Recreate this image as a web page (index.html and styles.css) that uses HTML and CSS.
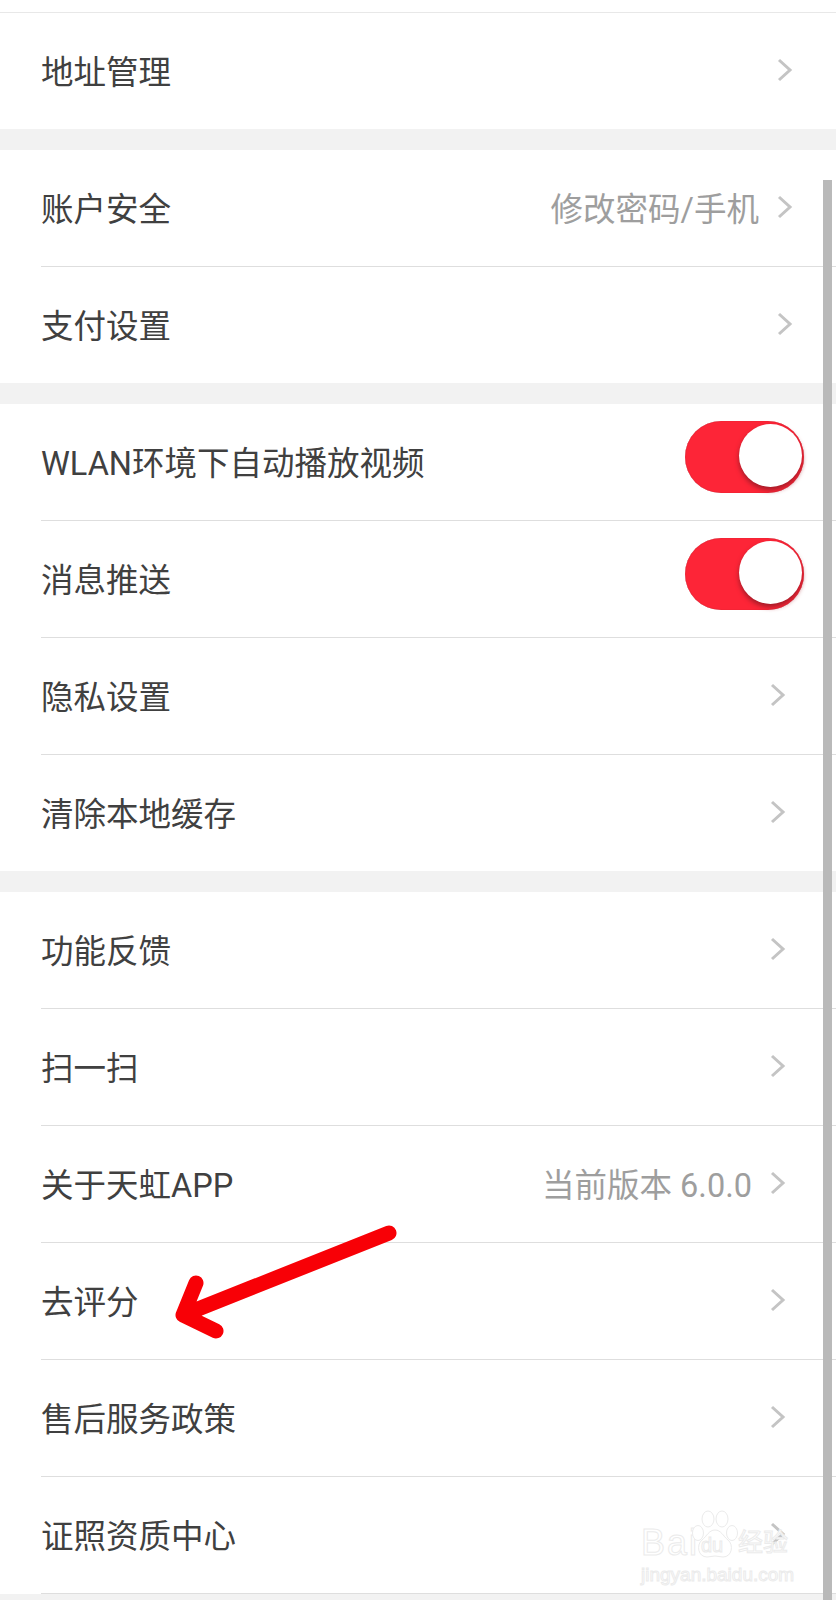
FILE: index.html
```html
<!DOCTYPE html>
<html lang="zh-CN">
<head>
    <meta charset="UTF-8">
    <meta name="viewport" content="width=device-width, initial-scale=1.0">
    <title>设置</title>
    <link rel="stylesheet" href="styles.css">
</head>
<body>
    <div class="page">
        <div class="stub"></div>
        <div class="group">
            <div class="row wide"><span class="label">地址管理</span><svg class="chev" viewBox="0 0 16 24"><path d="M2 2l11 10L2 22"/></svg></div>
        </div>
        <div class="group">
            <div class="row wide"><span class="label">账户安全</span><span class="value">修改密码/手机</span><svg class="chev" viewBox="0 0 16 24"><path d="M2 2l11 10L2 22"/></svg></div>
            <div class="row wide"><span class="label">支付设置</span><svg class="chev" viewBox="0 0 16 24"><path d="M2 2l11 10L2 22"/></svg></div>
        </div>
        <div class="group">
            <div class="row"><span class="label">WLAN环境下自动播放视频</span><span class="switch"><span class="knob"></span></span></div>
            <div class="row"><span class="label">消息推送</span><span class="switch"><span class="knob"></span></span></div>
            <div class="row"><span class="label">隐私设置</span><svg class="chev" viewBox="0 0 16 24"><path d="M2 2l11 10L2 22"/></svg></div>
            <div class="row"><span class="label">清除本地缓存</span><svg class="chev" viewBox="0 0 16 24"><path d="M2 2l11 10L2 22"/></svg></div>
        </div>
        <div class="group">
            <div class="row"><span class="label">功能反馈</span><svg class="chev" viewBox="0 0 16 24"><path d="M2 2l11 10L2 22"/></svg></div>
            <div class="row"><span class="label">扫一扫</span><svg class="chev" viewBox="0 0 16 24"><path d="M2 2l11 10L2 22"/></svg></div>
            <div class="row"><span class="label">关于天虹APP</span><span class="value">当前版本 6.0.0</span><svg class="chev" viewBox="0 0 16 24"><path d="M2 2l11 10L2 22"/></svg></div>
            <div class="row"><span class="label">去评分</span><svg class="chev" viewBox="0 0 16 24"><path d="M2 2l11 10L2 22"/></svg></div>
            <div class="row"><span class="label">售后服务政策</span><svg class="chev" viewBox="0 0 16 24"><path d="M2 2l11 10L2 22"/></svg></div>
            <div class="row row-end"><span class="label">证照资质中心</span><svg class="chev" viewBox="0 0 16 24"><path d="M2 2l11 10L2 22"/></svg></div>
        </div>

        <div class="scrollbar"></div>

        <svg class="arrow" viewBox="0 0 240 130">
            <path d="M221 9L15 91M28 59L15 91L48 107"/>
        </svg>

        <div class="watermark">
            <div class="wm-top">
                <span class="wm-bai">Bai</span>
                <span class="wm-logo">
                    <svg class="wm-paw" viewBox="0 0 46 48">
                        <ellipse cx="6" cy="23" rx="5.5" ry="7.5"/>
                        <ellipse cx="16" cy="9" rx="6" ry="8"/>
                        <ellipse cx="30" cy="9" rx="6" ry="8"/>
                        <ellipse cx="40" cy="23" rx="5.5" ry="7.5"/>
                        <path d="M23 20c-6 0-8 6-13 10-6 5-4 17 5 17 3 0 5-1 8-1s5 1 8 1c9 0 11-12 5-17-5-4-7-10-13-10z"/>
                    </svg>
                    <span class="wm-du">du</span>
                </span>
                <span class="wm-cn">经验</span>
            </div>
            <div class="wm-url">jingyan.baidu.com</div>
        </div>
    </div>
</body>
</html>
```

FILE: styles.css
```css
* {
    margin: 0;
    padding: 0;
    box-sizing: border-box;
}

body {
    font-family: Roboto, "Noto Sans CJK SC", sans-serif;
    background: #f2f2f2;
}

.page {
    position: relative;
    width: 836px;
    height: 1600px;
    overflow: hidden;
}

.stub {
    height: 13px;
    background: #fff;
    border-bottom: 1px solid #e8e8e8;
}

.group {
    background: #fff;
    margin-bottom: 21px;
}

.group:last-of-type {
    margin-bottom: 0;
}

.row {
    height: 117px;
    margin-left: 41px;
    padding: 0 50px 3px 0;
    display: flex;
    align-items: center;
    border-bottom: 1px solid #dedede;
    font-size: 32.5px;
    color: #404040;
}

.group > .row:last-child {
    height: 116px;
    border-bottom: none;
}

.group > .row.row-end {
    height: 117px;
    border-bottom: 1px solid #dedede;
}

.wide {
    padding-right: 43px;
}

.label {
    flex: 1;
    white-space: nowrap;
}

.value {
    color: #9e9e9e;
    white-space: nowrap;
    margin-right: 18px;
}

.chev {
    width: 16px;
    height: 24px;
    fill: none;
    stroke: #c4c4c4;
    stroke-width: 3;
}

.switch {
    position: relative;
    width: 119px;
    height: 72px;
    margin: 0 -18px 8px 0;
    border-radius: 36px;
    background: #fd2537;
    box-shadow: inset 0 0 1px #a8202c;
}

.knob {
    position: absolute;
    top: 3px;
    right: 2px;
    width: 63px;
    height: 63px;
    border-radius: 50%;
    background: #fff;
    box-shadow: 0 3px 5px #a01c28;
}

.scrollbar {
    position: absolute;
    top: 180px;
    right: 4px;
    bottom: 0;
    width: 9px;
    background: #b9b9b9;
}

.arrow {
    position: absolute;
    left: 168px;
    top: 1224px;
    width: 240px;
    height: 130px;
    fill: none;
    stroke: #f80006;
    stroke-width: 15;
    stroke-linecap: round;
    stroke-linejoin: round;
}

.watermark {
    position: absolute;
    left: 641px;
    top: 1510px;
    width: 152px;
    color: #fff;
    -webkit-text-stroke: 1px #ebebeb;
}

.wm-top {
    display: flex;
    align-items: flex-end;
    height: 48px;
}

.wm-bai {
    font-family: "Liberation Sans", sans-serif;
    font-size: 36px;
    line-height: 30px;
    width: 51px;
    letter-spacing: 2px;
}

.wm-logo {
    position: relative;
    width: 46px;
    height: 48px;
}

.wm-paw {
    display: block;
    width: 46px;
    height: 48px;
    fill: #fff;
    stroke: #ebebeb;
    stroke-width: 1;
}

.wm-du {
    position: absolute;
    left: 9px;
    bottom: 2px;
    font-family: "Liberation Sans", sans-serif;
    font-size: 20px;
    line-height: 22px;
}

.wm-cn {
    font-size: 25px;
    line-height: 30px;
}

.wm-url {
    font-family: "Liberation Sans", sans-serif;
    font-size: 19px;
    line-height: 22px;
    margin-top: 6px;
    white-space: nowrap;
}
```
